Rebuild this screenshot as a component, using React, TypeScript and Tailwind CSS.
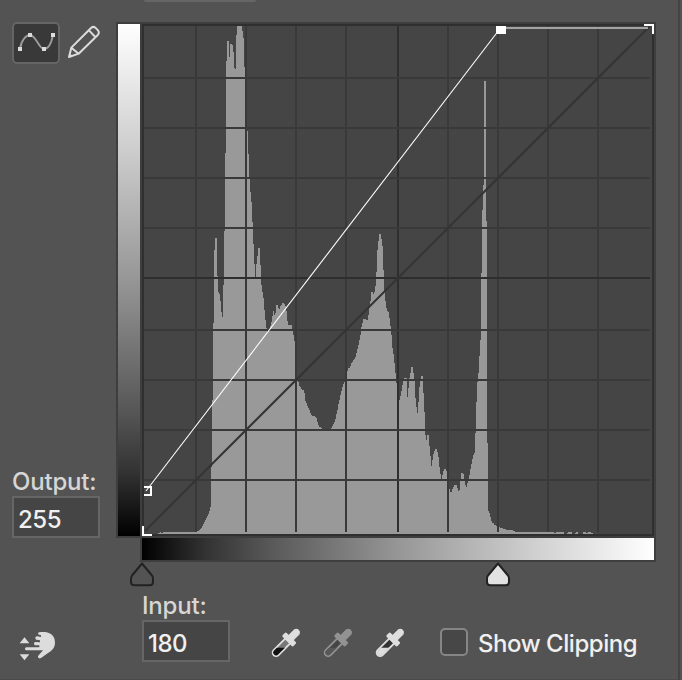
import React from "react";

// Histogram outline: [x, top] pairs, each top holding until the next x.
const HISTOGRAM: [number, number][] = [
  [158, 533], [160, 532], [161, 533], [163, 532], [197, 531], [199, 530], [200, 529], [201, 528], [202, 526],
  [203, 524], [204, 522], [205, 520], [206, 518], [207, 516], [208, 514], [209, 511], [210, 507], [211, 467], [212, 400],
  [213, 323], [214, 250], [215, 238], [217, 276], [218, 292], [219, 294], [220, 301], [221, 312], [222, 317],
  [223, 285], [224, 231], [225, 153], [226, 61], [227, 41], [229, 57], [230, 44], [232, 45], [233, 52],
  [234, 68], [235, 69], [236, 35], [237, 26], [242, 31], [243, 38], [244, 67], [245, 80], [247, 131],
  [248, 154], [249, 178], [250, 192], [251, 202], [252, 222], [253, 244], [254, 264], [255, 277], [256, 264],
  [257, 256], [258, 248], [260, 265], [261, 285], [262, 292], [263, 298], [264, 310], [265, 320], [266, 328],
  [267, 333], [268, 330], [269, 329], [270, 326], [271, 322], [272, 316], [273, 311], [274, 315], [275, 313],
  [276, 305], [278, 308], [279, 309], [280, 306], [281, 305], [282, 303], [284, 304], [285, 306], [286, 311],
  [287, 321], [288, 325], [292, 330], [293, 335], [294, 341], [295, 352], [297, 378], [298, 382], [299, 386],
  [300, 387], [301, 389], [302, 390], [304, 393], [305, 401], [306, 403], [307, 406], [308, 408], [309, 410],
  [310, 413], [311, 415], [312, 416], [315, 417], [316, 418], [317, 422], [318, 425], [319, 427], [321, 428],
  [322, 429], [323, 430], [327, 429], [331, 428], [332, 426], [333, 424], [334, 422], [335, 419], [336, 414],
  [337, 410], [338, 404], [339, 400], [340, 395], [341, 391], [342, 387], [343, 384], [344, 382], [345, 376],
  [347, 371], [348, 368], [350, 366], [351, 363], [352, 362], [353, 360], [354, 359], [355, 357], [356, 353],
  [357, 349], [358, 345], [359, 340], [360, 335], [361, 327], [362, 323], [363, 319], [366, 320], [368, 315],
  [369, 308], [370, 301], [371, 292], [373, 294], [374, 292], [375, 286], [376, 272], [377, 250], [378, 241],
  [379, 234], [381, 239], [382, 246], [383, 270], [384, 292], [385, 301], [386, 308], [387, 311], [388, 312],
  [389, 318], [390, 326], [391, 335], [392, 348], [393, 354], [394, 363], [395, 373], [396, 383], [397, 390],
  [399, 400], [400, 396], [401, 391], [402, 385], [403, 380], [404, 378], [407, 397], [408, 388], [409, 378],
  [410, 373], [411, 367], [413, 373], [414, 380], [415, 398], [416, 407], [417, 413], [418, 402], [419, 387],
  [420, 380], [421, 376], [423, 393], [424, 412], [425, 435], [426, 440], [427, 435], [429, 446], [430, 456],
  [431, 466], [432, 460], [433, 454], [434, 451], [435, 449], [437, 452], [438, 457], [439, 467], [440, 474],
  [441, 479], [442, 475], [443, 471], [444, 469], [446, 471], [447, 480], [449, 489], [450, 492], [452, 489],
  [453, 487], [454, 485], [457, 488], [458, 491], [459, 490], [460, 480], [461, 473], [463, 474], [464, 479],
  [465, 485], [466, 487], [467, 483], [468, 479], [469, 475], [470, 469], [471, 464], [472, 459], [473, 455],
  [474, 453], [475, 433], [476, 402], [477, 382], [478, 373], [479, 356], [480, 340], [481, 273], [482, 210],
  [483, 185], [484, 81], [486, 221], [487, 443], [488, 511], [489, 513], [490, 517], [491, 521], [492, 523],
  [494, 525], [496, 526], [498, 527], [500, 528], [503, 529], [506, 530], [513, 531], [515, 532], [554, 533],
  [556, 532], [564, 534], [567, 533], [568, 532], [572, 534], [575, 533], [576, 532], [578, 534], [583, 532],
  [586, 533], [588, 532], [591, 533],
];

const histogramPath =
  "M158 534" + HISTOGRAM.map(([x, y]) => `H${x}V${y}`).join("") + "H593V534Z";

const COLUMNS = [195, 245, 295, 345, 397, 447, 497, 547, 597];
const ROWS = [77, 127, 177, 227, 277, 329, 379, 429, 479];

function CurvesPlot() {
  return (
    <svg width="512" height="512" viewBox="142 24 512 512" className="block">
      <rect x="142" y="24" width="512" height="512" fill="#2f2f2f" />
      <rect x="144" y="26" width="508" height="508" fill="#454545" />
      <path d={histogramPath} fill="#999999" shapeRendering="crispEdges" />
      {COLUMNS.map((x) => (
        <rect key={x} x={x} y="26" width="2" height="506" fill={x === 397 ? "#2e2e2e" : "#393939"} />
      ))}
      {ROWS.map((y) => (
        <rect key={y} x="144" y={y} width="506" height="2" fill={y === 277 ? "#2e2e2e" : "#393939"} />
      ))}
      <path d="M145 531L650 26" stroke="#343434" strokeWidth="2" />
      <path d="M506 28H648" stroke="#a3a3a3" strokeWidth="2" />
      <path d="M146 491L499 30" stroke="#ffffff" strokeWidth="1.1" />
      <path d="M144 487H151V495H144" fill="none" stroke="#ffffff" strokeWidth="2" />
      <rect x="496" y="26" width="10" height="8" fill="#ffffff" />
      <path d="M644 25H653V34M143 526V535H152" fill="none" stroke="#ffffff" strokeWidth="2" />
    </svg>
  );
}

function CurveIcon() {
  return (
    <svg width="44" height="38" viewBox="42 72 132 114">
      <path
        d="M60 147C64 118 80 105 90 105C108 105 116 147 132 147C146 147 155 125 159 105"
        fill="none"
        stroke="#9c9c9c"
        strokeWidth="5.5"
      />
      <path d="M54 141h12v12h-12zM84 99h12v12h-12zM126 141h12v12h-12zM153 99h12v12h-12z" fill="#dcdcdc" />
    </svg>
  );
}

function PencilIcon() {
  return (
    <svg width="34" height="34" viewBox="201 75 102 102">
      <g fill="none" stroke="#dcdcdc" strokeWidth="6" strokeLinejoin="round">
        <path d="M207 171L214 143L273 84Q280 78 286 83L294 91Q299 98 294 104L236 161Z" />
        <path d="M214 143L236 161M267 91L286 111" />
      </g>
      <path d="M206 173L208 160L219 168Z" fill="#dcdcdc" />
    </svg>
  );
}

function HandIcon() {
  return (
    <svg width="38" height="32" viewBox="57 119 114 96" fill="#dcdcdc">
      <path d="M59 159L73.500 141L88 159ZM59 192H88L73.500 210Z" />
      <path d="M118 126C140 123 165 128 165 157C165 177 149 184 141 190L123 203Q117 206 114 201Q113 198 116 195L129 180H79Q75 180 75 175.500Q75 171 79 171H118V165H106Q102 164 102 160Q102 156 106 155L120 156V150L109 148Q105 146 106 141Q108 138 112 138L123 140V135L117 133Q114 131 114 129Q115 126 118 126Z" />
    </svg>
  );
}

function Eyedropper({
  id,
  body,
  glass,
  liquid,
}: {
  id: string;
  body: string;
  glass: string;
  liquid: string;
}) {
  return (
    <svg width="34" height="34" viewBox="45 46 102 102">
      <clipPath id={id}>
        <rect x="45" y="111" width="102" height="40" />
      </clipPath>
      <g transform="translate(106 86) rotate(45)">
        <path d="M-10 5V56A10 10 0 0 0 10 56V5Z" fill={glass} />
      </g>
      <g transform="translate(106 86) rotate(45)">
        <path d="M-10.500 5V56A10.500 10.500 0 0 0 10.500 56V5Z" fill="none" stroke={body} strokeWidth="5.5" />
        <rect x="-23" y="-8" width="46" height="17" rx="4" fill={body} />
        <path d="M-11 0V-32A11.500 11.500 0 0 1 11 -32V0Z" fill={body} />
      </g>
      <g clipPath={`url(#${id})`}>
        <g transform="translate(106 86) rotate(45)">
          <path d="M-8.500 5V56A8.500 8.500 0 0 0 8.500 56V5Z" fill={liquid} />
        </g>
      </g>
    </svg>
  );
}

function SliderHandle({ fill }: { fill: string }) {
  return (
    <svg width="24" height="25" viewBox="0 0 24 25" className="block">
      <path
        d="M12 1.500L22 13.500Q23 15 23 17V20Q23 23.300 19.500 23.300H4.500Q1 23.300 1 20V17Q1 15 2 13.500Z"
        fill={fill}
        stroke="#222222"
        strokeWidth="2"
        strokeLinejoin="round"
      />
    </svg>
  );
}

function NumberBox({ value }: { value: string }) {
  return (
    <div className="flex h-[42px] w-[88px] items-center border-2 border-[#666666] bg-[#454545] pt-[5px] pl-1 text-2xl leading-none font-medium tracking-[-0.5px] text-[#f0f0f0]">
      {value}
    </div>
  );
}

export default function App() {
  return (
    <div className="flex h-[680px] w-[682px] overflow-hidden bg-[#535353] font-['Inter',sans-serif] text-[#d6d6d6]">
      <main className="flex w-[678px] flex-col border-b border-[#4a4a4a]">
        <div className="h-[22px] shrink-0 pl-36">
          <div className="h-[2px] w-28 rounded-b-[2px] bg-[#666666]" />
        </div>

        <section className="flex h-[540px] shrink-0">
          <div className="flex w-[116px] shrink-0 flex-col pl-3">
            <div className="flex items-start gap-[7px]">
              <div className="h-[42px] w-12 shrink-0 rounded-[5px] border-2 border-[#656565] bg-[#393939]">
                <CurveIcon />
              </div>
              <div className="pt-[3px]">
                <PencilIcon />
              </div>
            </div>
            <div className="mt-[402px] flex h-[30px] items-center pt-[2px] text-2xl leading-none font-medium tracking-[-0.2px]">
              Output:
            </div>
            <NumberBox value="255" />
          </div>

          <div className="w-[540px] shrink-0">
            <div className="flex gap-[2px] bg-[#3e3e3e] p-[2px]">
              <div className="h-[512px] w-[22px] bg-[linear-gradient(to_top,#000_0%,#333_12.500%,#585858_25%,#969696_50%,#cccccc_75%,#fff_100%)]" />
              <CurvesPlot />
            </div>
            <div className="ml-6 h-6 bg-[#3e3e3e] px-[2px] pb-[2px]">
              <div className="h-[22px] bg-[linear-gradient(to_right,#000_0%,#333_12.500%,#585858_25%,#969696_50%,#cccccc_75%,#fff_100%)]" />
            </div>
          </div>
        </section>

        <div className="flex h-[28px] shrink-0 gap-[332px] pl-[130px]">
          <SliderHandle fill="#535353" />
          <SliderHandle fill="#e2e2e2" />
        </div>

        <section className="flex shrink-0">
          <div className="w-[142px] pt-[40px] pl-[19px]">
            <HandIcon />
          </div>
          <div className="w-[127px]">
            <div className="flex h-[30px] items-center pt-[2px] text-2xl leading-none font-medium tracking-[-0.2px]">
              Input:
            </div>
            <NumberBox value="180" />
          </div>
          <div className="flex gap-[18px] pt-[36px]">
            <Eyedropper id="black-point" body="#dedede" glass="#777777" liquid="#111111" />
            <Eyedropper id="gray-point" body="#929292" glass="#454545" liquid="#585858" />
            <Eyedropper id="white-point" body="#dedede" glass="#333333" liquid="#dedede" />
          </div>
          <label className="mt-[38px] ml-[33px] flex h-7 items-center gap-[10px]">
            <span className="size-7 rounded-[5px] border-2 border-[#868686] bg-[#474747]" />
            <span className="pt-[3px] text-2xl leading-none font-medium tracking-[-0.45px] whitespace-nowrap text-[#f0f0f0]">
              Show Clipping
            </span>
          </label>
        </section>
      </main>
      <aside className="w-1 border-l-2 border-[#434343]" />
    </div>
  );
}
